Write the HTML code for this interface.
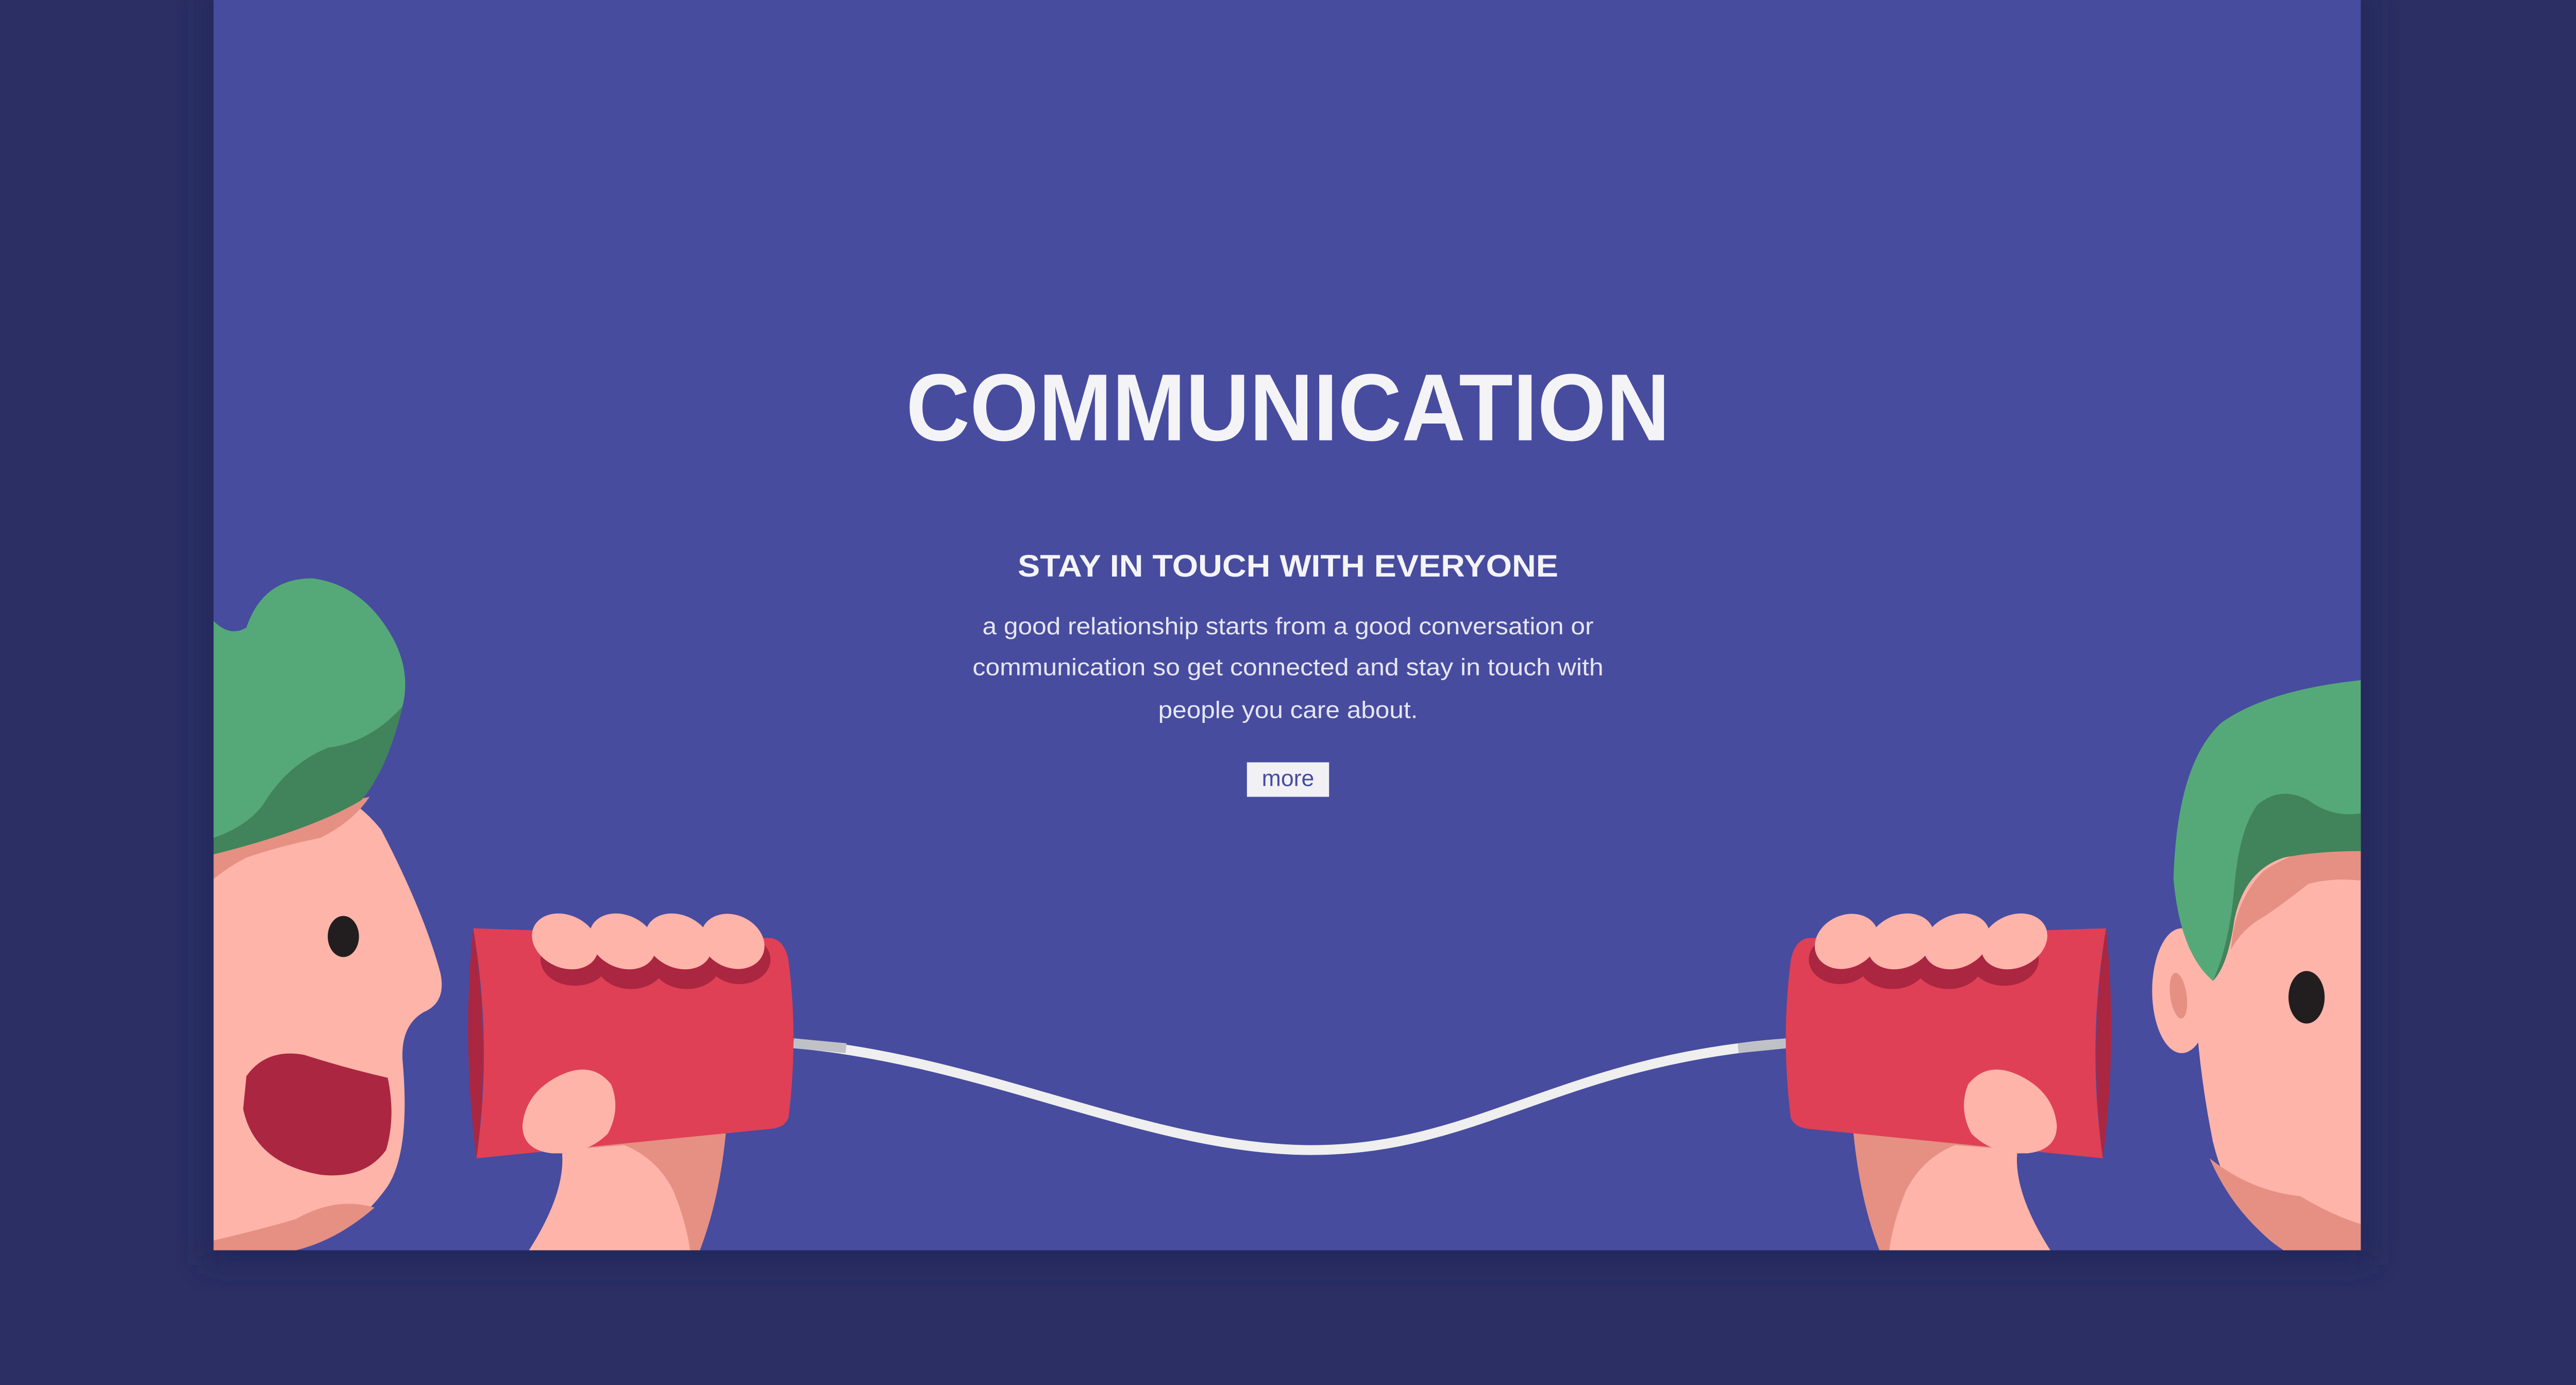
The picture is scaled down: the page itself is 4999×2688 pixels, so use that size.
<!DOCTYPE html>
<html><head><meta charset="utf-8"><style>
html,body{margin:0;padding:0;background:#2b2f63;}
svg{display:block;}
</style></head><body>
<svg width="4999" height="2688" viewBox="0 0 1568 843" preserveAspectRatio="none" xmlns="http://www.w3.org/2000/svg">
<defs>
<clipPath id="card"><rect x="130" y="0" width="1307" height="761"/></clipPath>
<filter id="sh" x="-10%" y="-10%" width="120%" height="120%"><feGaussianBlur stdDeviation="8"/></filter>
<g id="canhand">
  <path d="M322,761 Q345,725 342,700 L442,688 Q438,730 426,761Z" fill="#e59083"/>
  <path d="M322,761 Q345,725 342,700 L380,697 Q400,705 410,725 Q418,745 420,761Z" fill="#ffb4aa"/>
  <path d="M288,565 L470,571 Q478,573 480,585 Q486,632 480,680 Q478,686 470,687 L290,705 Q300,635 288,565Z" fill="#df4055"/>
  <path d="M288,565 Q281,635 290,705 Q299,635 288,565Z" fill="#ab2640"/>
  <g fill="#ab2640">
    <ellipse cx="350" cy="584" rx="21" ry="16"/>
    <ellipse cx="384" cy="586" rx="21" ry="16"/>
    <ellipse cx="418" cy="586" rx="21" ry="16"/>
    <ellipse cx="450" cy="584" rx="19" ry="15"/>
  </g>
  <g fill="#ffb4aa">
    <ellipse cx="344" cy="573" rx="21" ry="16" transform="rotate(25 344 573)"/>
    <ellipse cx="379" cy="573" rx="21" ry="16" transform="rotate(25 379 573)"/>
    <ellipse cx="413" cy="573" rx="21" ry="16" transform="rotate(25 413 573)"/>
    <ellipse cx="446" cy="573" rx="20" ry="16" transform="rotate(25 446 573)"/>
  </g>
  <path d="M336,702 Q318,700 318,685 Q320,665 340,655 Q360,645 372,660 Q378,675 370,690 Q360,700 345,702Z" fill="#ffb4aa"/>
</g>
</defs>
<rect width="1568" height="843" fill="#2b2f63"/>
<rect x="124" y="-10" width="1320" height="780" fill="#22255a" filter="url(#sh)" opacity="0.8"/>
<rect x="130" y="0" width="1307" height="761" fill="#474c9f"/>
<g clip-path="url(#card)">
  <path d="M483,635 C600,645 700,700 798,700 C900,700 950,645 1088,635" fill="none" stroke="#efefef" stroke-width="6"/>
  <path d="M483,635 L515,638" stroke="#bfc1c6" stroke-width="6"/>
  <path d="M1058,638 L1088,635" stroke="#bfc1c6" stroke-width="6"/>

  <path d="M130,470 Q200,465 232,505 Q258,555 268,592 Q272,610 258,616 Q244,624 245,645 Q250,700 236,722 Q215,752 180,761 L130,761Z" fill="#ffb4aa"/>
  <path d="M130,505 L225,485 Q215,500 195,510 Q170,515 150,522 Q140,527 130,535Z" fill="#e59083"/>
  <path d="M130,755 Q160,748 180,742 Q205,728 228,735 Q205,755 180,761 L130,761Z" fill="#e59083"/>
  <path d="M130,378 Q140,388 150,382 Q160,352 190,352 Q222,356 240,390 Q250,410 245,430 Q236,468 220,487 Q190,505 130,520Z" fill="#55a978"/>
  <path d="M130,510 Q150,503 160,490 Q175,465 200,455 Q225,452 245,430 Q236,468 220,487 Q190,505 130,520Z" fill="#41835a"/>
  <ellipse cx="209" cy="570" rx="9.5" ry="12.5" fill="#221e1f"/>
  <path d="M150,655 Q162,638 185,642 Q210,650 236,656 Q241,680 235,700 Q222,718 195,715 Q155,708 148,675Z" fill="#ab2640"/>

  <use href="#canhand"/>
  <use href="#canhand" transform="translate(1570,0) scale(-1,1)"/>

  <!-- right head -->
  <path d="M1437,512 L1437,761 L1390,761 Q1358,740 1347,695 Q1337,645 1336,600 Q1336,540 1380,520 Q1410,512 1437,512Z" fill="#ffb4aa"/>
  <ellipse cx="1328" cy="603" rx="18" ry="38" fill="#ffb4aa"/>
  <ellipse cx="1326" cy="606" rx="5" ry="14" fill="#e59083" transform="rotate(-8 1326 606)"/>
  <path d="M1437,512 L1437,536 Q1420,534 1405,538 Q1390,550 1378,558 Q1365,565 1358,578 Q1360,548 1378,530 Q1400,515 1437,512Z" fill="#e59083"/>
  <path d="M1345,705 Q1370,725 1400,728 Q1420,740 1437,745 L1437,761 L1390,761 Q1360,740 1345,705Z" fill="#e59083"/>
  <path d="M1437,414 Q1380,420 1352,440 Q1325,465 1323,535 Q1327,580 1347,597 Q1356,588 1360,560 Q1366,530 1390,522 Q1410,518 1437,518Z" fill="#55a978"/>
  <path d="M1437,495 Q1420,498 1405,487 Q1388,478 1374,490 Q1363,505 1360,540 Q1357,575 1347,597 Q1356,588 1360,560 Q1366,530 1390,522 Q1410,518 1437,518Z" fill="#41835a"/>
  <ellipse cx="1404" cy="607" rx="11" ry="16" fill="#221e1f"/>
</g>

<text x="784" y="268" text-anchor="middle" font-family="Liberation Sans, sans-serif" font-weight="bold" font-size="58" fill="#f4f4f6" textLength="465" lengthAdjust="spacingAndGlyphs">COMMUNICATION</text>
<text x="784" y="351" text-anchor="middle" font-family="Liberation Sans, sans-serif" font-weight="bold" font-size="19" fill="#f4f4f6" textLength="329" lengthAdjust="spacingAndGlyphs">STAY IN TOUCH WITH EVERYONE</text>
<g font-family="Liberation Sans, sans-serif" font-size="14.5" fill="#e6e6f2" text-anchor="middle">
<text x="784" y="386" textLength="372" lengthAdjust="spacingAndGlyphs">a good relationship starts from a good conversation or</text>
<text x="784" y="411" textLength="384" lengthAdjust="spacingAndGlyphs">communication so get connected and stay in touch with</text>
<text x="784" y="437" textLength="158" lengthAdjust="spacingAndGlyphs">people you care about.</text>
</g>
<rect x="759" y="464" width="50" height="21" fill="#f1f1f5"/>
<text x="784" y="478.5" text-anchor="middle" font-family="Liberation Sans, sans-serif" font-size="14" fill="#474c9f">more</text>
</svg>
</body></html>
